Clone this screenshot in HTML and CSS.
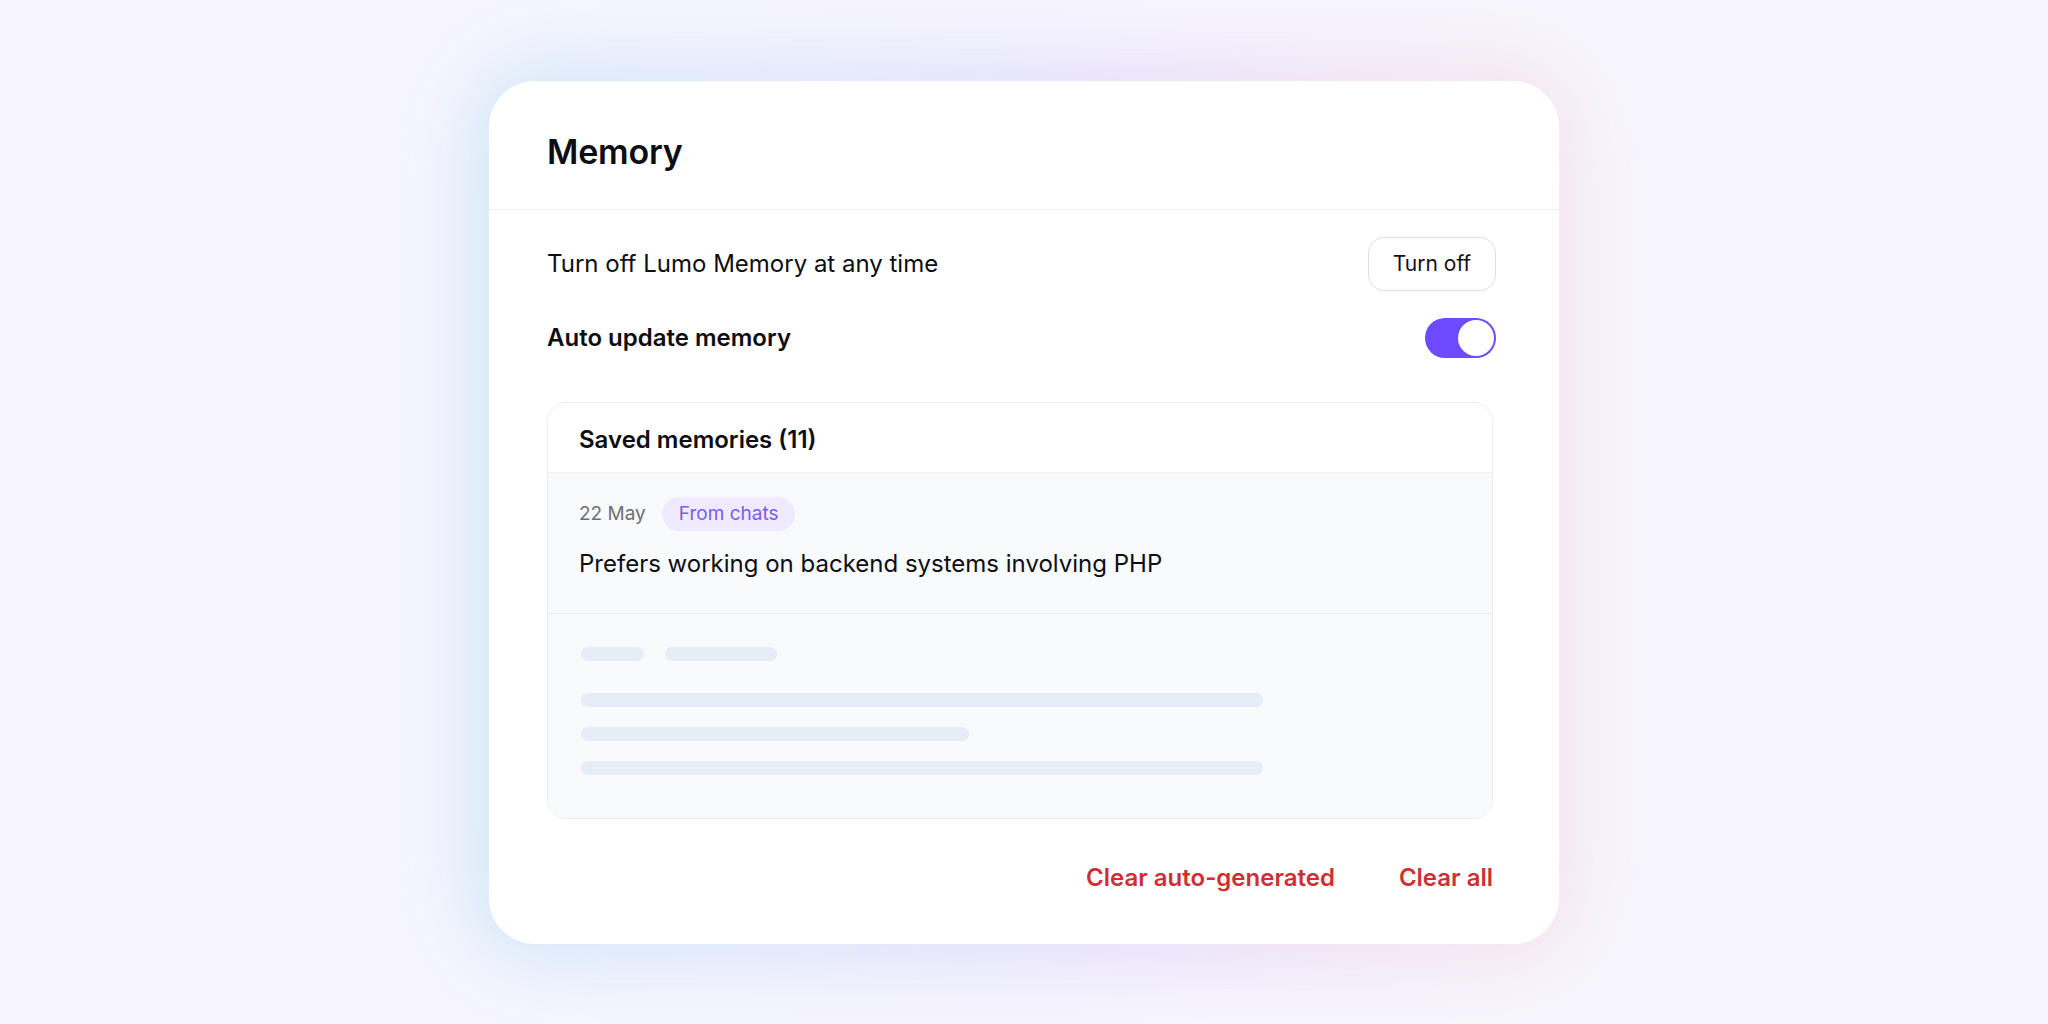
FILE: index.html
```html
<!DOCTYPE html>
<html lang="en">
<head>
<meta charset="utf-8">
<title>Memory</title>
<link rel="stylesheet" href="styles.css">
</head>
<body>
<main class="stage">
  <section class="card">
    <header class="card-head">
      <h1 class="title">Memory</h1>
    </header>
    <div class="card-body">
      <div class="row row-first">
        <span class="row-label">Turn off Lumo Memory at any time</span>
        <button class="btn-outline">Turn off</button>
      </div>
      <div class="row row-second">
        <span class="row-label strong">Auto update memory</span>
        <span class="toggle"><span class="knob"></span></span>
      </div>

      <div class="memories">
        <div class="mem-head">Saved memories (11)</div>
        <div class="mem-item">
          <div class="meta">
            <span class="date">22 May</span>
            <span class="badge">From chats</span>
          </div>
          <p class="mem-text">Prefers working on backend systems involving PHP</p>
        </div>
        <div class="mem-skeleton">
          <div class="sk-meta">
            <span class="sk sk-date"></span>
            <span class="sk sk-badge"></span>
          </div>
          <div class="sk-lines">
            <span class="sk sk-line"></span>
            <span class="sk sk-line sk-short"></span>
            <span class="sk sk-line"></span>
          </div>
        </div>
      </div>

      <div class="footer">
        <button class="btn-danger">Clear auto-generated</button>
        <button class="btn-danger">Clear all</button>
      </div>
    </div>
  </section>
</main>
</body>
</html>
```
FILE: styles.css
```css
html {
  background: #f6f5fd;
}
body {
  margin: 0;
  font-family: Inter, "Noto Sans", "Liberation Sans", sans-serif;
  color: #0d0e13;
}
.stage {
  height: 1024px;
  display: flex;
  align-items: center;
  justify-content: center;
  isolation: isolate;
}
.card {
  position: relative;
  width: 1070px;
  background: #fff;
  border-radius: 46px;
}
.card::before {
  content: "";
  position: absolute;
  inset: -18px;
  z-index: -1;
  border-radius: 70px;
  background: linear-gradient(90deg, #cde6f8 0%, #d6e3fb 25%, #dcdcfc 45%, #e4d9fa 60%, #f0dcf0 78%, #f6e2ec 100%);
  filter: blur(38px);
  opacity: 0.9;
}
.card-head {
  height: 129px;
  padding: 51px 58px 0;
  box-sizing: border-box;
  border-bottom: 1px solid #eeeef1;
}
.title {
  margin: 0;
  font-size: 34px;
  line-height: 40px;
  font-weight: 600;
  letter-spacing: -0.2px;
}
.card-body {
  padding: 27px 66px 50px 58px;
}
.row {
  height: 54px;
  display: flex;
  align-items: center;
  justify-content: space-between;
  margin-right: -3px;
}
.row-second {
  margin-top: 20px;
}
.row-label {
  font-size: 24px;
  line-height: 32px;
}
.row-label.strong {
  font-weight: 600;
}
.btn-outline {
  height: 54px;
  width: 128px;
  font-family: inherit;
  font-size: 21px;
  color: #111;
  background: #fff;
  border: 1.5px solid #e0e0e3;
  border-radius: 16px;
  padding: 0;
}
.toggle {
  width: 71px;
  height: 40px;
  border-radius: 20px;
  background: #6d4aff;
  display: flex;
  align-items: center;
  justify-content: flex-end;
  padding: 0 2px;
  box-sizing: border-box;
}
.knob {
  width: 36px;
  height: 36px;
  border-radius: 50%;
  background: #fff;
}
.memories {
  margin-top: 37px;
  border: 1px solid #ececf0;
  border-radius: 20px;
  overflow: hidden;
}
.mem-head {
  padding: 21px 31px 16px;
  font-size: 24px;
  line-height: 32px;
  font-weight: 600;
  border-bottom: 1px solid #eef0f3;
  background: #fff;
}
.mem-item {
  background: #f8fafc;
  padding: 24px 31px 33px;
  border-bottom: 1px solid #eceff3;
}
.meta {
  display: flex;
  align-items: center;
  gap: 16px;
  height: 34px;
}
.date {
  font-size: 19px;
  color: #6b6e78;
}
.badge {
  height: 34px;
  display: inline-flex;
  align-items: center;
  padding: 0 17px;
  border-radius: 17px;
  background: #efeafe;
  color: #7b5ce8;
  font-size: 19px;
}
.mem-text {
  margin: 17px 0 0;
  font-size: 24px;
  line-height: 32px;
}
.mem-skeleton {
  background: #f8fafc;
  padding: 33px 31px 43px 33px;
}
.sk {
  display: block;
  height: 14px;
  border-radius: 7px;
  background: #e6edf6;
}
.sk-meta {
  display: flex;
  gap: 21px;
}
.sk-date { width: 63px; }
.sk-badge { width: 112px; }
.sk-lines {
  margin-top: 32px;
  display: flex;
  flex-direction: column;
  gap: 20px;
}
.sk-line { width: 682px; }
.sk-short { width: 388px; }
.footer {
  margin-top: 43px;
  display: flex;
  justify-content: flex-end;
  gap: 64px;
}
.btn-danger {
  font-family: inherit;
  font-size: 24px;
  line-height: 32px;
  font-weight: 600;
  color: #cf2f33;
  background: none;
  border: 0;
  padding: 0;
}
```
